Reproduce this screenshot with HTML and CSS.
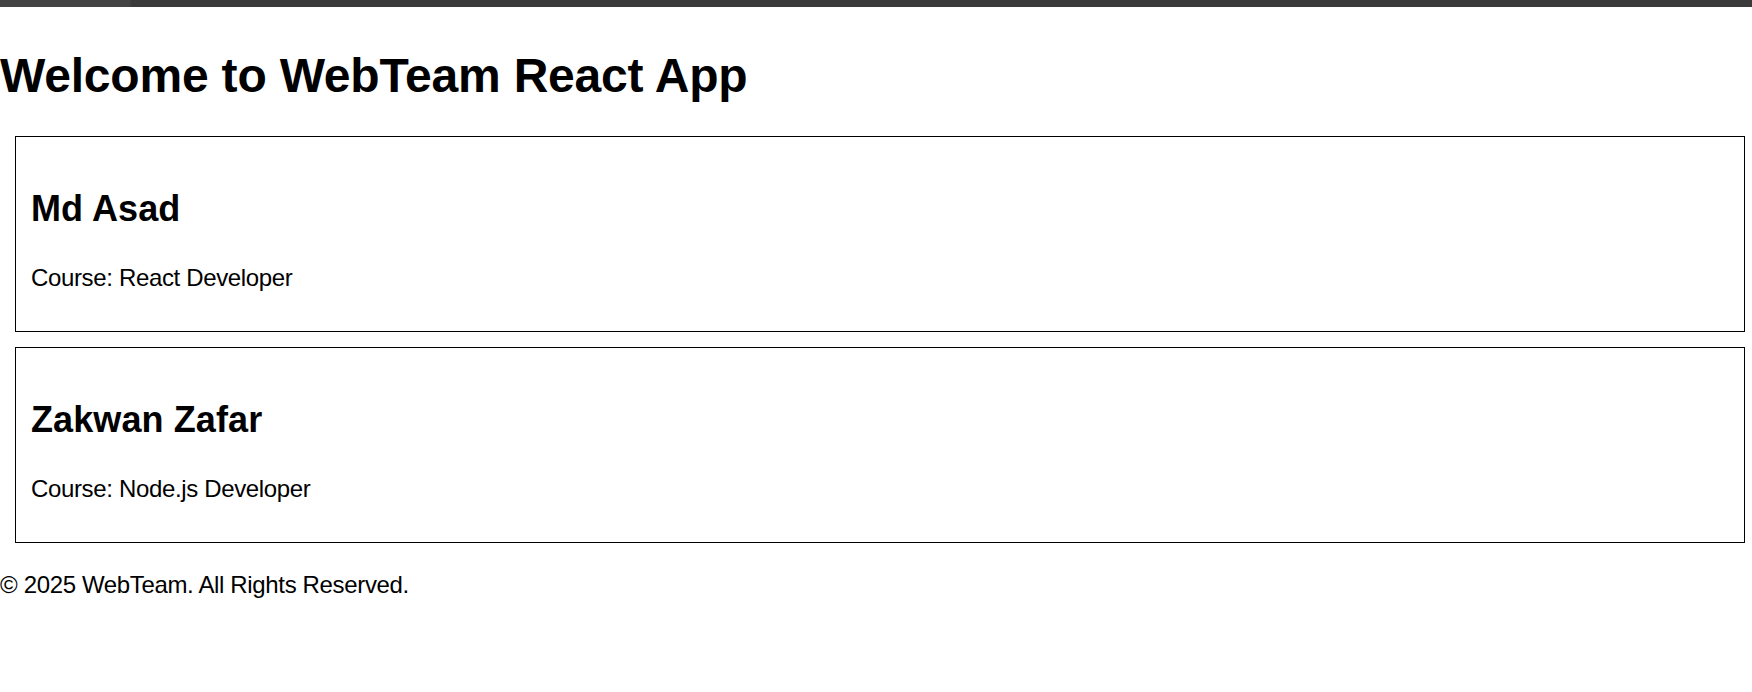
FILE: index.html
```html
<!DOCTYPE html>
<html lang="en">
<head>
<meta charset="utf-8">
<title>WebTeam React App</title>
<link rel="stylesheet" href="styles.css">
</head>
<body>
<div class="topbar"></div>
<h1 class="title">Welcome to WebTeam React App</h1>
<div class="card">
  <h2 class="card-name">Md Asad</h2>
  <p class="card-course">Course: React Developer</p>
</div>
<div class="card">
  <h2 class="card-name">Zakwan Zafar</h2>
  <p class="card-course">Course: Node.js Developer</p>
</div>
<footer class="footer">© 2025 WebTeam. All Rights Reserved.</footer>
</body>
</html>
```
FILE: styles.css
```css
html, body {
  margin: 0;
  padding: 0;
  background: #ffffff;
}
body {
  font-family: "Liberation Sans", Arial, sans-serif;
  color: #000;
}
.topbar {
  height: 7px;
  background: linear-gradient(to right, #434343 0, #434343 130px, #3a3a3a 131px, #3a3a3a 100%);
}
.title {
  margin: 41px 0 32px 0;
  font-size: 48px;
  line-height: 56px;
  font-weight: 700;
  letter-spacing: -0.2px;
}
.card {
  margin: 0 7px 15px 15px;
  padding: 0 15px;
  border: 1px solid #000;
}
.card-name {
  margin: 51px 0 34px 0;
  font-size: 36px;
  line-height: 42px;
  font-weight: 700;
  letter-spacing: 0.1px;
}
.card-course {
  margin: 0 0 39px 0;
  font-size: 24px;
  line-height: 28px;
  letter-spacing: -0.35px;
}
.footer {
  margin-top: 28px;
  font-size: 24px;
  line-height: 28px;
  letter-spacing: -0.35px;
}
```
